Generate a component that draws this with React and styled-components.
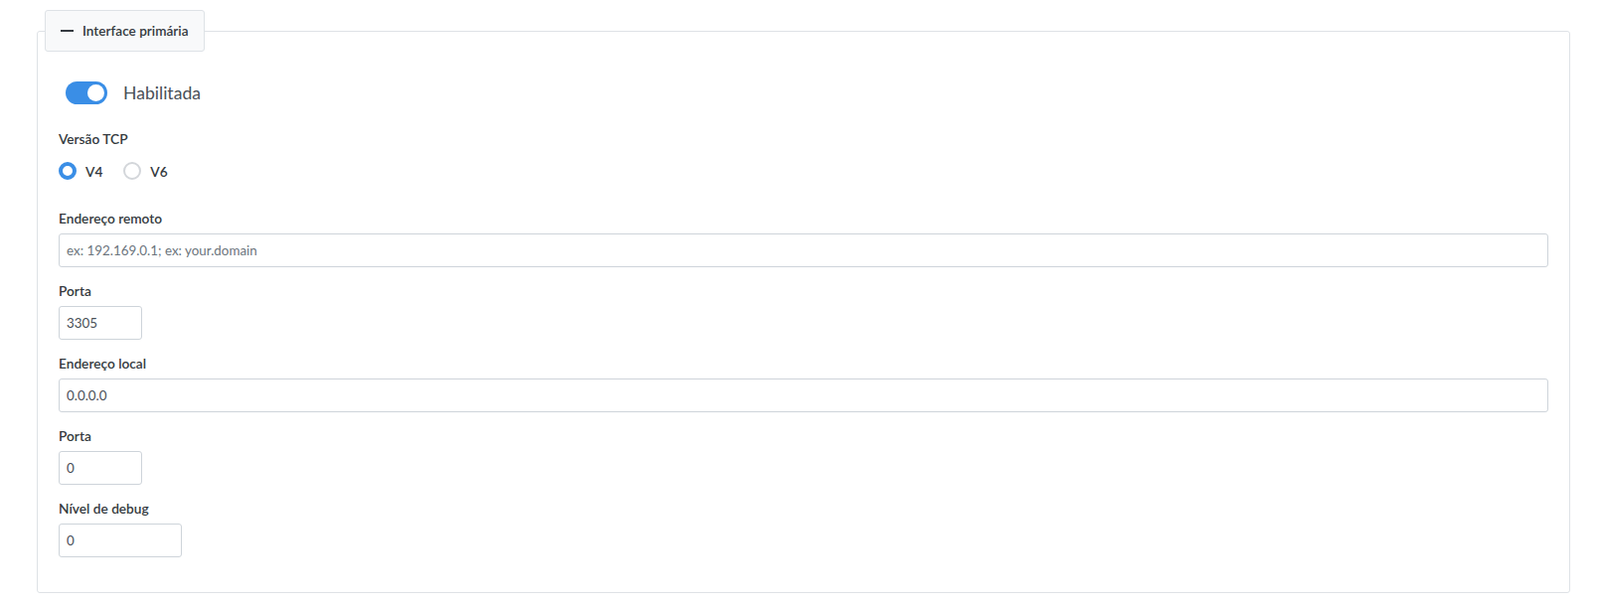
import styled, { createGlobalStyle } from 'styled-components'

const GlobalStyle = createGlobalStyle`
    body {
        margin: 0;
        background: #ffffff;
        font-family: Lato, "Open Sans", sans-serif;
        color: #343a40;
    }
`

function App() {
    return (
        <Page>
            <GlobalStyle />
            <Fieldset>
                <Legend>
                    <Minus />
                    Interface primária
                </Legend>
                <Body>
                    <ToggleRow>
                        <Switch $on />
                        <ToggleLabel>Habilitada</ToggleLabel>
                    </ToggleRow>

                    <Label>Versão TCP</Label>
                    <RadioRow>
                        <RadioItem>
                            <Radio $checked />
                            V4
                        </RadioItem>
                        <RadioItem>
                            <Radio />
                            V6
                        </RadioItem>
                    </RadioRow>

                    <Group>
                        <Label>Endereço remoto</Label>
                        <Input placeholder="ex: 192.169.0.1; ex: your.domain" />
                    </Group>
                    <Group>
                        <Label>Porta</Label>
                        <Input $width="84px" defaultValue="3305" />
                    </Group>
                    <Group>
                        <Label>Endereço local</Label>
                        <Input defaultValue="0.0.0.0" />
                    </Group>
                    <Group>
                        <Label>Porta</Label>
                        <Input $width="84px" defaultValue="0" />
                    </Group>
                    <Group $last>
                        <Label>Nível de debug</Label>
                        <Input $width="124px" defaultValue="0" />
                    </Group>
                </Body>
            </Fieldset>
        </Page>
    )
}

const Page = styled.div`
    padding: 10px 30px 11px 37px;
`

const Fieldset = styled.fieldset`
    margin: 0;
    padding: 0 7px 35px;
    border: 1px solid #dee2e6;
    border-radius: 3px;
    min-width: 0;
`

const Legend = styled.legend`
    display: flex;
    align-items: center;
    gap: 9px;
    height: 42px;
    box-sizing: border-box;
    padding: 0 15px;
    background: #f8f9fa;
    border: 1px solid #dee2e6;
    border-radius: 3px;
    font-size: 13.6px;
    font-weight: 600;
    color: #343a40;
`

const Minus = styled.span`
    width: 13px;
    height: 1.5px;
    background: #343a40;
`

const Body = styled.div`
    padding: 0 14px;
`

const ToggleRow = styled.div`
    display: flex;
    align-items: center;
    gap: 16px;
    height: 30px;
    margin-top: 26px;
    margin-bottom: 22px;
`

const Switch = styled.span`
    position: relative;
    width: 42px;
    height: 23px;
    border-radius: 12px;
    background: ${p => (p.$on ? '#3a8ee6' : '#dee2e6')};
    margin-left: 7px;

    &::after {
        content: '';
        position: absolute;
        top: 3px;
        left: ${p => (p.$on ? '22px' : '3px')};
        width: 17px;
        height: 17px;
        border-radius: 50%;
        background: #ffffff;
    }
`

const ToggleLabel = styled.span`
    font-size: 17.6px;
    color: #495057;
`

const Label = styled.div`
    font-size: 13.7px;
    font-weight: 600;
    line-height: 20px;
    margin-bottom: 5px;
    color: #343a40;
`

const RadioRow = styled.div`
    display: flex;
    gap: 21px;
    height: 18px;
    margin-top: 13px;
    margin-bottom: 29px;
`

const RadioItem = styled.label`
    display: flex;
    align-items: center;
    gap: 9px;
    font-size: 13.7px;
    font-weight: 600;
    color: #343a40;
`

const Radio = styled.span`
    box-sizing: border-box;
    width: 18px;
    height: 18px;
    border-radius: 50%;
    border: ${p => (p.$checked ? '4px solid #3a8ee6' : '2px solid #d3d6da')};
    background: #ffffff;
`

const Group = styled.div`
    margin-bottom: ${p => (p.$last ? '0' : '14px')};
`

const Input = styled.input`
    display: block;
    box-sizing: border-box;
    width: ${p => p.$width || '100%'};
    height: 34px;
    padding: 0 7px;
    border: 1px solid #ced4da;
    border-radius: 3px;
    font-family: Lato, "Open Sans", sans-serif;
    font-size: 13.4px;
    color: #495057;
    outline: none;

    &::placeholder {
        color: #6c757d;
    }
`

export default App
